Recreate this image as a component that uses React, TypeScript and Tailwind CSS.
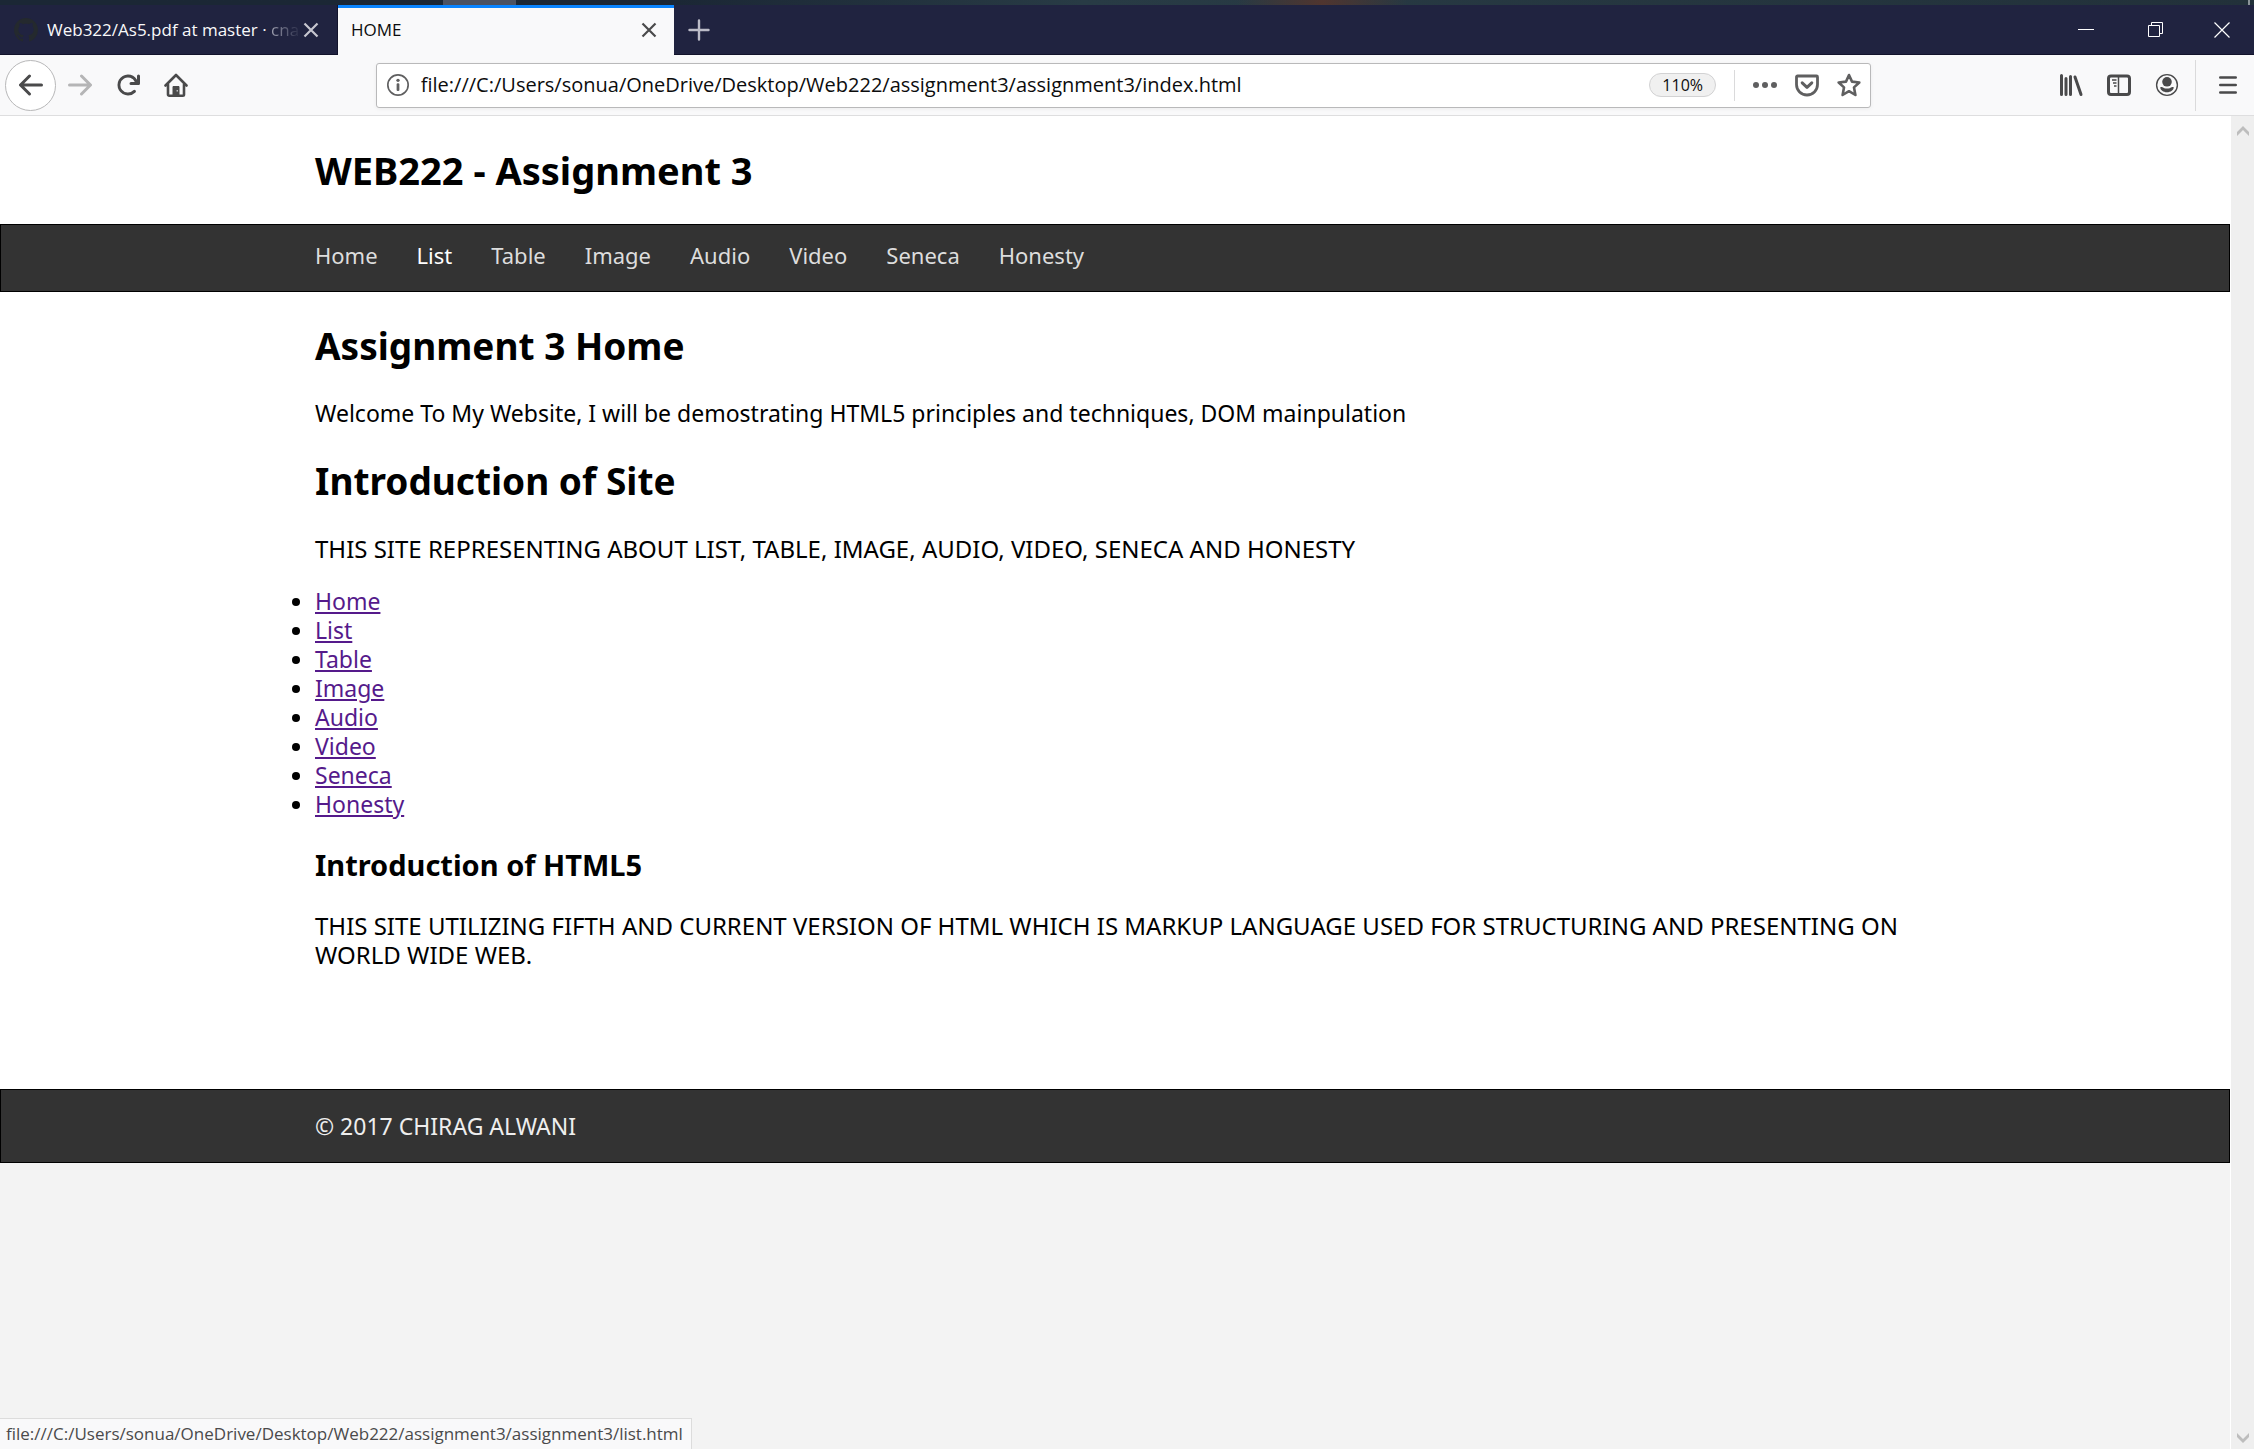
import type { ReactNode } from "react";

const pages = ["Home", "List", "Table", "Image", "Audio", "Video", "Seneca", "Honesty"];

function IconButton({ label, className, children }: { label: string; className?: string; children: ReactNode }) {
  return (
    <button type="button" aria-label={label} className={`flex shrink-0 items-center justify-center ${className ?? ""}`}>
      {children}
    </button>
  );
}

function ArrowIcon({ className }: { className?: string }) {
  return (
    <svg viewBox="0 0 16 16" className={`size-6 ${className ?? ""}`} fill="currentColor">
      <path d="M15 7H3.414l4.293-4.293a1 1 0 0 0-1.414-1.414l-6 6a1 1 0 0 0 0 1.414l6 6a1 1 0 0 0 1.414-1.414L3.414 9H15a1 1 0 0 0 0-2z" />
    </svg>
  );
}

function CloseIcon() {
  return (
    <svg viewBox="0 0 16 16" className="size-4" fill="none" stroke="currentColor" strokeWidth="2.2">
      <path d="M1.5 1.5 14.5 14.5M14.5 1.5 1.5 14.5" />
    </svg>
  );
}

function TabStrip() {
  return (
    <div className="flex h-[50px] items-stretch border-b border-[#12132b] bg-[#202340]">
      <div className="flex w-[338px] items-center border-r border-[#12132b] pl-[14px] pr-4 text-[#f9f9fa]">
        <svg viewBox="0 0 16 16" className="size-6 shrink-0" fill="#24292e">
          <path d="M8 0C3.58 0 0 3.58 0 8c0 3.54 2.29 6.53 5.47 7.59.4.07.55-.17.55-.38 0-.19-.01-.82-.01-1.49-2.01.37-2.53-.49-2.69-.94-.09-.23-.48-.94-.82-1.13-.28-.15-.68-.52-.01-.53.63-.01 1.08.58 1.23.82.72 1.21 1.87.87 2.33.66.07-.52.28-.87.51-1.07-1.78-.2-3.64-.89-3.64-3.95 0-.87.31-1.59.82-2.15-.08-.2-.36-1.02.08-2.12 0 0 .67-.21 2.2.82.64-.18 1.32-.27 2-.27s1.36.09 2 .27c1.53-1.04 2.2-.82 2.2-.82.44 1.1.16 1.92.08 2.12.51.56.82 1.27.82 2.15 0 3.07-1.87 3.75-3.65 3.95.29.25.54.73.54 1.48 0 1.07-.01 1.93-.01 2.2 0 .21.15.46.55.38A8.01 8.01 0 0 0 16 8c0-4.42-3.58-8-8-8z" />
        </svg>
        <span className="ml-[9px] flex-1 whitespace-nowrap text-[17px]">
          Web322/As5.pdf at master ·{" "}
          <span className="bg-linear-to-r from-[#a0a1b0] to-[#2c2f4a] bg-clip-text text-transparent">cna</span>
        </span>
        <IconButton label="Close Web322 tab" className="size-5 text-[#c6c6cf]">
          <CloseIcon />
        </IconButton>
      </div>
      <div className="-mb-px flex w-[336px] items-center border-t-3 border-[#0a84ff] bg-[#f9f9fa] pb-[3px] pl-[13px] pr-[15px] text-[#0c0c0d]">
        <span className="flex-1 text-[17px]">HOME</span>
        <IconButton label="Close HOME tab" className="size-5 text-[#4a4a4b]">
          <CloseIcon />
        </IconButton>
      </div>
      <IconButton label="New tab" className="w-[50px] text-[#bcbcc8]">
        <svg viewBox="0 0 22 22" className="size-[22px]" fill="none" stroke="currentColor" strokeWidth="2.4" strokeLinecap="round">
          <path d="M11 1.5v19M1.5 11h19" />
        </svg>
      </IconButton>
      <div className="flex-1" />
      <div className="flex text-white">
        <IconButton label="Minimize" className="w-[68px]">
          <svg viewBox="0 0 16 16" className="size-4" fill="currentColor">
            <path d="M0 7h16v1H0z" />
          </svg>
        </IconButton>
        <IconButton label="Restore" className="w-[70px]">
          <svg viewBox="0 0 15 15" className="size-[15px]" fill="none" stroke="currentColor">
            <path d="M.5 3.5h11v11H.5zM3.5 3.5v-3h11v11h-3" />
          </svg>
        </IconButton>
        <IconButton label="Close window" className="w-16">
          <svg viewBox="0 0 16 16" className="size-4" fill="none" stroke="currentColor" strokeWidth="1.2">
            <path d="M.5.5l15 15M15.5.5l-15 15" />
          </svg>
        </IconButton>
      </div>
    </div>
  );
}

function Toolbar() {
  return (
    <div className="flex h-[61px] items-center border-b border-[#dededf] bg-[#f9f9fa] text-[#4a4a4b]">
      <IconButton label="Back" className="ml-[5px] size-[51px] rounded-full border border-[#b8b8b9] bg-white">
        <ArrowIcon />
      </IconButton>
      <IconButton label="Forward" className="w-12 text-[#b5b5b6]">
        <ArrowIcon className="rotate-180" />
      </IconButton>
      <IconButton label="Reload" className="w-12">
        <svg viewBox="0 0 16 16" className="size-6" fill="currentColor">
          <path d="M15 1a1 1 0 0 0-1 1v2.418A6.995 6.995 0 1 0 8 15a6.954 6.954 0 0 0 4.95-2.05 1 1 0 0 0-1.414-1.414A5.019 5.019 0 1 1 12.549 6H10a1 1 0 0 0 0 2h5a1 1 0 0 0 1-1V2a1 1 0 0 0-1-1z" />
        </svg>
      </IconButton>
      <IconButton label="Home page" className="w-12">
        <svg viewBox="0 0 24 24" className="size-6" fill="none" stroke="currentColor" strokeWidth="2.6" strokeLinecap="round" strokeLinejoin="round">
          <path d="M1.5 12.5 12 2l10.500 10.500" />
          <path d="M4 11.500V21.500a1.200 1.200 0 0 0 1.200 1.200h13.600a1.200 1.200 0 0 0 1.200-1.200V11.500" />
          <path d="M9 22.500V13.500h6v9z" fill="currentColor" strokeWidth="1" />
          <path d="M13.200 17.500v.5" stroke="#f9f9fa" strokeWidth="1.200" />
        </svg>
      </IconButton>
      <div className="w-[7.8%]" />
      <div className="flex h-[45px] flex-1 items-center rounded-[3px] border border-[#b9b9ba] bg-white pl-[10px] text-[#5f5f60] shadow-[0_1px_4px_rgba(0,0,0,0.06)]">
        <svg viewBox="0 0 16 16" className="size-[22px] shrink-0" fill="currentColor">
          <path fillRule="evenodd" d="M8 0a8 8 0 1 0 0 16A8 8 0 0 0 8 0zm0 1.200a6.800 6.800 0 1 1 0 13.600A6.800 6.800 0 0 1 8 1.200z" />
          <circle cx="8" cy="4.600" r="1.200" />
          <rect x="7" y="6.800" width="2" height="5.600" rx=".8" />
        </svg>
        <input
          type="text"
          aria-label="Address"
          defaultValue="file:///C:/Users/sonua/OneDrive/Desktop/Web222/assignment3/assignment3/index.html"
          className="ml-3 min-w-0 flex-1 bg-transparent text-xl text-[#0c0c0d] outline-none"
        />
        <button type="button" className="h-6 w-[67px] rounded-full border border-[#d2d2d3] bg-[#f0f0f0] text-base leading-5 text-[#0c0c0d]">
          110%
        </button>
        <div className="ml-[18px] h-[31px] w-px bg-[#dadadb]" />
        <IconButton label="Page actions" className="ml-[9px] w-[42px]">
          <svg viewBox="0 0 24 24" className="size-6" fill="currentColor">
            <circle cx="3" cy="12" r="3" />
            <circle cx="12" cy="12" r="3" />
            <circle cx="21" cy="12" r="3" />
          </svg>
        </IconButton>
        <IconButton label="Save to Pocket" className="w-[42px]">
          <svg viewBox="0 0 24 24" className="size-6" fill="none" stroke="currentColor" strokeWidth="3" strokeLinecap="round" strokeLinejoin="round">
            <path d="M2.500 3h19a1 1 0 0 1 1 1v7.500a10.500 10.500 0 0 1-21 0V4a1 1 0 0 1 1-1z" strokeWidth="2.800" />
            <path d="M7.200 9.800 12 14.300l4.800-4.500" />
          </svg>
        </IconButton>
        <IconButton label="Bookmark this page" className="w-[42px]">
          <svg viewBox="0 0 24 24" className="size-6" fill="none" stroke="currentColor" strokeWidth="2.600" strokeLinejoin="round">
            <path d="M12 2l3 6.600 7.300.9-5.300 4.900 1.400 7.600L12 18.200 5.600 22 7 14.400 1.700 9.500 9 8.600z" />
          </svg>
        </IconButton>
      </div>
      <div className="w-[7.8%]" />
      <IconButton label="Library" className="w-12">
        <svg viewBox="0 0 24 24" className="size-6" fill="none" stroke="currentColor" strokeWidth="3" strokeLinecap="round">
          <path d="M2.500 2.500v19M7 5.500v16M11.500 3.500v18M16 4l6 17.500" />
        </svg>
      </IconButton>
      <IconButton label="Sidebars" className="w-12">
        <svg viewBox="0 0 24 24" className="size-6" fill="none" stroke="currentColor" strokeWidth="3" strokeLinejoin="round">
          <rect x="1.500" y="3" width="21" height="18.500" rx="2.500" />
          <path d="M11.500 3v18" strokeWidth="1.500" />
          <path d="M5 7h4.500M6 10h3.500M7 13h2.500" strokeWidth="1.300" />
        </svg>
      </IconButton>
      <IconButton label="Account" className="w-12">
        <svg viewBox="0 0 24 24" className="size-6" fill="currentColor">
          <circle cx="12" cy="12" r="10.400" fill="none" stroke="currentColor" strokeWidth="1.400" />
          <circle cx="12" cy="8.800" r="4.800" />
          <path d="M5.300 14.300c1.600-.6 2.800.5 4 .9 1.800.5 3.600.5 5.400 0 1.200-.4 2.400-1.500 4-.9.200 2.700-3 5-6.700 5s-6.900-2.300-6.700-5z" />
        </svg>
      </IconButton>
      <div className="ml-1 h-[51px] w-px bg-[#dadadb]" />
      <IconButton label="Open menu" className="ml-3 mr-[6px] w-10">
        <svg viewBox="0 0 18 18" className="size-[18px]" fill="none" stroke="currentColor" strokeWidth="2.600" strokeLinecap="round">
          <path d="M1.300 1.500h15.400M1.300 9h15.400M1.300 16.500h15.400" />
        </svg>
      </IconButton>
    </div>
  );
}

function Container({ className, children }: { className?: string; children: ReactNode }) {
  return <div className={`mx-auto w-full max-w-[1600px] ${className ?? ""}`}>{children}</div>;
}

function Site() {
  return (
    <div className="flex-1 font-['Noto_Sans',sans-serif] text-[23px] leading-[29px] text-black">
      <div className="bg-white">
        <Container className="pb-[31px] pt-[31px]">
          <h1 className="text-[38px] leading-[46px] font-bold">WEB222 - Assignment 3</h1>
        </Container>
        <nav className="h-[68px] border border-black bg-[#333] pt-4">
          <Container>
            <ul className="flex gap-[39px] text-[22px]">
              {pages.map((page) => (
                <li key={page}>
                  <a href={`#${page}`} className={page === "List" ? "text-white" : "text-[#ddd]"}>
                    {page}
                  </a>
                </li>
              ))}
            </ul>
          </Container>
        </nav>
        <main>
          <Container className="pb-[120px] pt-[31px]">
            <h1 className="mb-[30px] text-[37px] leading-[46px] font-bold">Assignment 3 Home</h1>
            <p>Welcome To My Website, I will be demostrating HTML5 principles and techniques, DOM mainpulation</p>
            <h1 className="my-[30px] text-[37px] leading-[46px] font-bold">Introduction of Site</h1>
            <p className="text-2xl leading-[29px]">
              THIS SITE REPRESENTING ABOUT LIST, TABLE, IMAGE, AUDIO, VIDEO, SENECA AND HONESTY
            </p>
            <ul className="my-6 list-disc">
              {pages.map((page) => (
                <li key={page}>
                  <a href={`#${page}`} className="text-[#551a8b] underline decoration-2 underline-offset-2">
                    {page}
                  </a>
                </li>
              ))}
            </ul>
            <h2 className="my-7 text-[29px] leading-9 font-bold">Introduction of HTML5</h2>
            <p className="text-2xl leading-[29px]">
              THIS SITE UTILIZING FIFTH AND CURRENT VERSION OF HTML WHICH IS MARKUP LANGUAGE USED FOR STRUCTURING AND
              PRESENTING ON WORLD WIDE WEB.
            </p>
          </Container>
        </main>
        <footer className="h-[74px] border border-black bg-[#333] pt-[22px] text-[#eee]">
          <Container>
            <p>© 2017 CHIRAG ALWANI</p>
          </Container>
        </footer>
      </div>
    </div>
  );
}

function Scrollbar() {
  return (
    <div className="flex w-6 shrink-0 flex-col items-center justify-between border-l border-white bg-[#efefef] pb-[6px] pt-[10px] text-[#bdbdbd]">
      <svg viewBox="0 0 12 10" className="h-[10px] w-3" fill="currentColor">
        <path d="M6 0l6 6v4L6 4 0 10V6z" />
      </svg>
      <svg viewBox="0 0 12 10" className="h-[10px] w-3" fill="currentColor">
        <path d="M6 10L0 4V0l6 6 6-6v4z" />
      </svg>
    </div>
  );
}

export default function App() {
  return (
    <div className="relative flex min-h-screen flex-col bg-[#f3f3f3] font-['Open_Sans',sans-serif]">
      <div className="flex h-[5px] bg-linear-to-r from-[#1b2735] from-30% via-[#283b45] via-48% to-[#22313a]">
        <div className="ml-[443px] w-[73px] bg-[#4b5262]" />
        <div className="ml-[32%] w-[170px] bg-linear-to-r from-transparent via-[#50352f] to-transparent" />
        <div className="ml-auto mr-1 w-0.5 bg-[#8b9499]" />
      </div>
      <TabStrip />
      <Toolbar />
      <div className="flex flex-1">
        <Site />
        <Scrollbar />
      </div>
      <div className="absolute bottom-0 left-0 h-[31px] border-r border-t border-[#dcdcdc] bg-[#f9f9fa] pl-[6px] pr-2 text-[17px] leading-[30px] text-[#4a4a4b]">
        file:///C:/Users/sonua/OneDrive/Desktop/Web222/assignment3/assignment3/list.html
      </div>
    </div>
  );
}
